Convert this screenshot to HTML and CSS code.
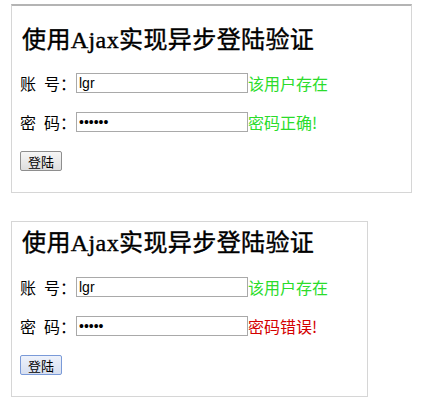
FILE: index.html
```html
<!DOCTYPE html>
<html lang="zh-CN">
  <head>
    <meta charset="UTF-8" />
    <title>使用Ajax实现异步登陆验证</title>
    <link rel="stylesheet" href="styles.css">
  </head>
  <body>
    <div class="login_box login_box-first">
      <h2 class="login_title">使用Ajax实现异步登陆验证</h2>
      <div class="login_row">
        <span class="login_label">账&ensp;号：</span>
        <input class="login_input" type="text" value="lgr" />
        <span class="login_msg login_msg-ok">该用户存在</span>
      </div>
      <div class="login_row">
        <span class="login_label">密&ensp;码：</span>
        <input class="login_input" type="password" value="123456" />
        <span class="login_msg login_msg-ok">密码正确!</span>
      </div>
      <div class="login_row">
        <button class="login_btn" type="button">登陆</button>
      </div>
    </div>

    <div class="login_box login_box-second">
      <h2 class="login_title">使用Ajax实现异步登陆验证</h2>
      <div class="login_row">
        <span class="login_label">账&ensp;号：</span>
        <input class="login_input" type="text" value="lgr" />
        <span class="login_msg login_msg-ok">该用户存在</span>
      </div>
      <div class="login_row">
        <span class="login_label">密&ensp;码：</span>
        <input class="login_input" type="password" value="12345" />
        <span class="login_msg login_msg-err">密码错误!</span>
      </div>
      <div class="login_row">
        <button class="login_btn login_btn-focus" type="button">登陆</button>
      </div>
    </div>
  </body>
</html>
```

FILE: styles.css
```css
body {
  margin: 4px 0 0 11px;
  color: #000;
  background: #fff;
  font-family: "Liberation Serif", "Noto Sans CJK SC", serif;
  font-size: 16px;
}

.login_box {
  box-sizing: border-box;
  border: 1px solid #d6d6d6;
  padding: 0 8px 21px 8px;
}

.login_box-first {
  width: 401px;
  border-top: 2px solid #b4b4b4;
  padding-top: 20px;
}

.login_box-second {
  width: 357px;
  margin-top: 28px;
  padding-top: 7px;
}

.login_title {
  margin: 0 0 19px 2px;
  font-size: 24px;
  line-height: 28px;
  font-weight: normal;
  letter-spacing: 0.4px;
  -webkit-text-stroke: 0.4px #000;
}

.login_box-second .login_title {
  margin-bottom: 20px;
}

.login_row {
  display: flex;
  align-items: center;
  height: 20px;
  margin-bottom: 19px;
}

.login_row:last-child {
  margin-bottom: 0;
}

.login_label {
  width: 56px;
  font-family: "Noto Sans CJK SC", sans-serif;
  font-size: 16px;
  white-space: nowrap;
}

.login_input {
  box-sizing: border-box;
  width: 172px;
  height: 20px;
  margin: 0;
  padding: 0 2px;
  border: 1px solid #a9a9a9;
  font-family: "Liberation Sans", sans-serif;
  font-size: 14px;
  color: #000;
}

.login_msg {
  font-family: "Noto Sans CJK SC", sans-serif;
  font-size: 16px;
  line-height: 20px;
}

.login_msg-ok {
  color: #2bdc2b;
}

.login_msg-err {
  color: #d40000;
}

.login_btn {
  box-sizing: border-box;
  width: 42px;
  height: 20px;
  margin: 0;
  padding: 0;
  border: 1px solid #8e8e8e;
  border-radius: 2px;
  background: linear-gradient(#f6f6f6, #dedede);
  font-family: "Noto Sans CJK SC", sans-serif;
  font-size: 13px;
  color: #000;
}

.login_btn-focus {
  border-color: #7a9ad8;
  background: linear-gradient(#eef2fb, #d7dff0);
}
```
